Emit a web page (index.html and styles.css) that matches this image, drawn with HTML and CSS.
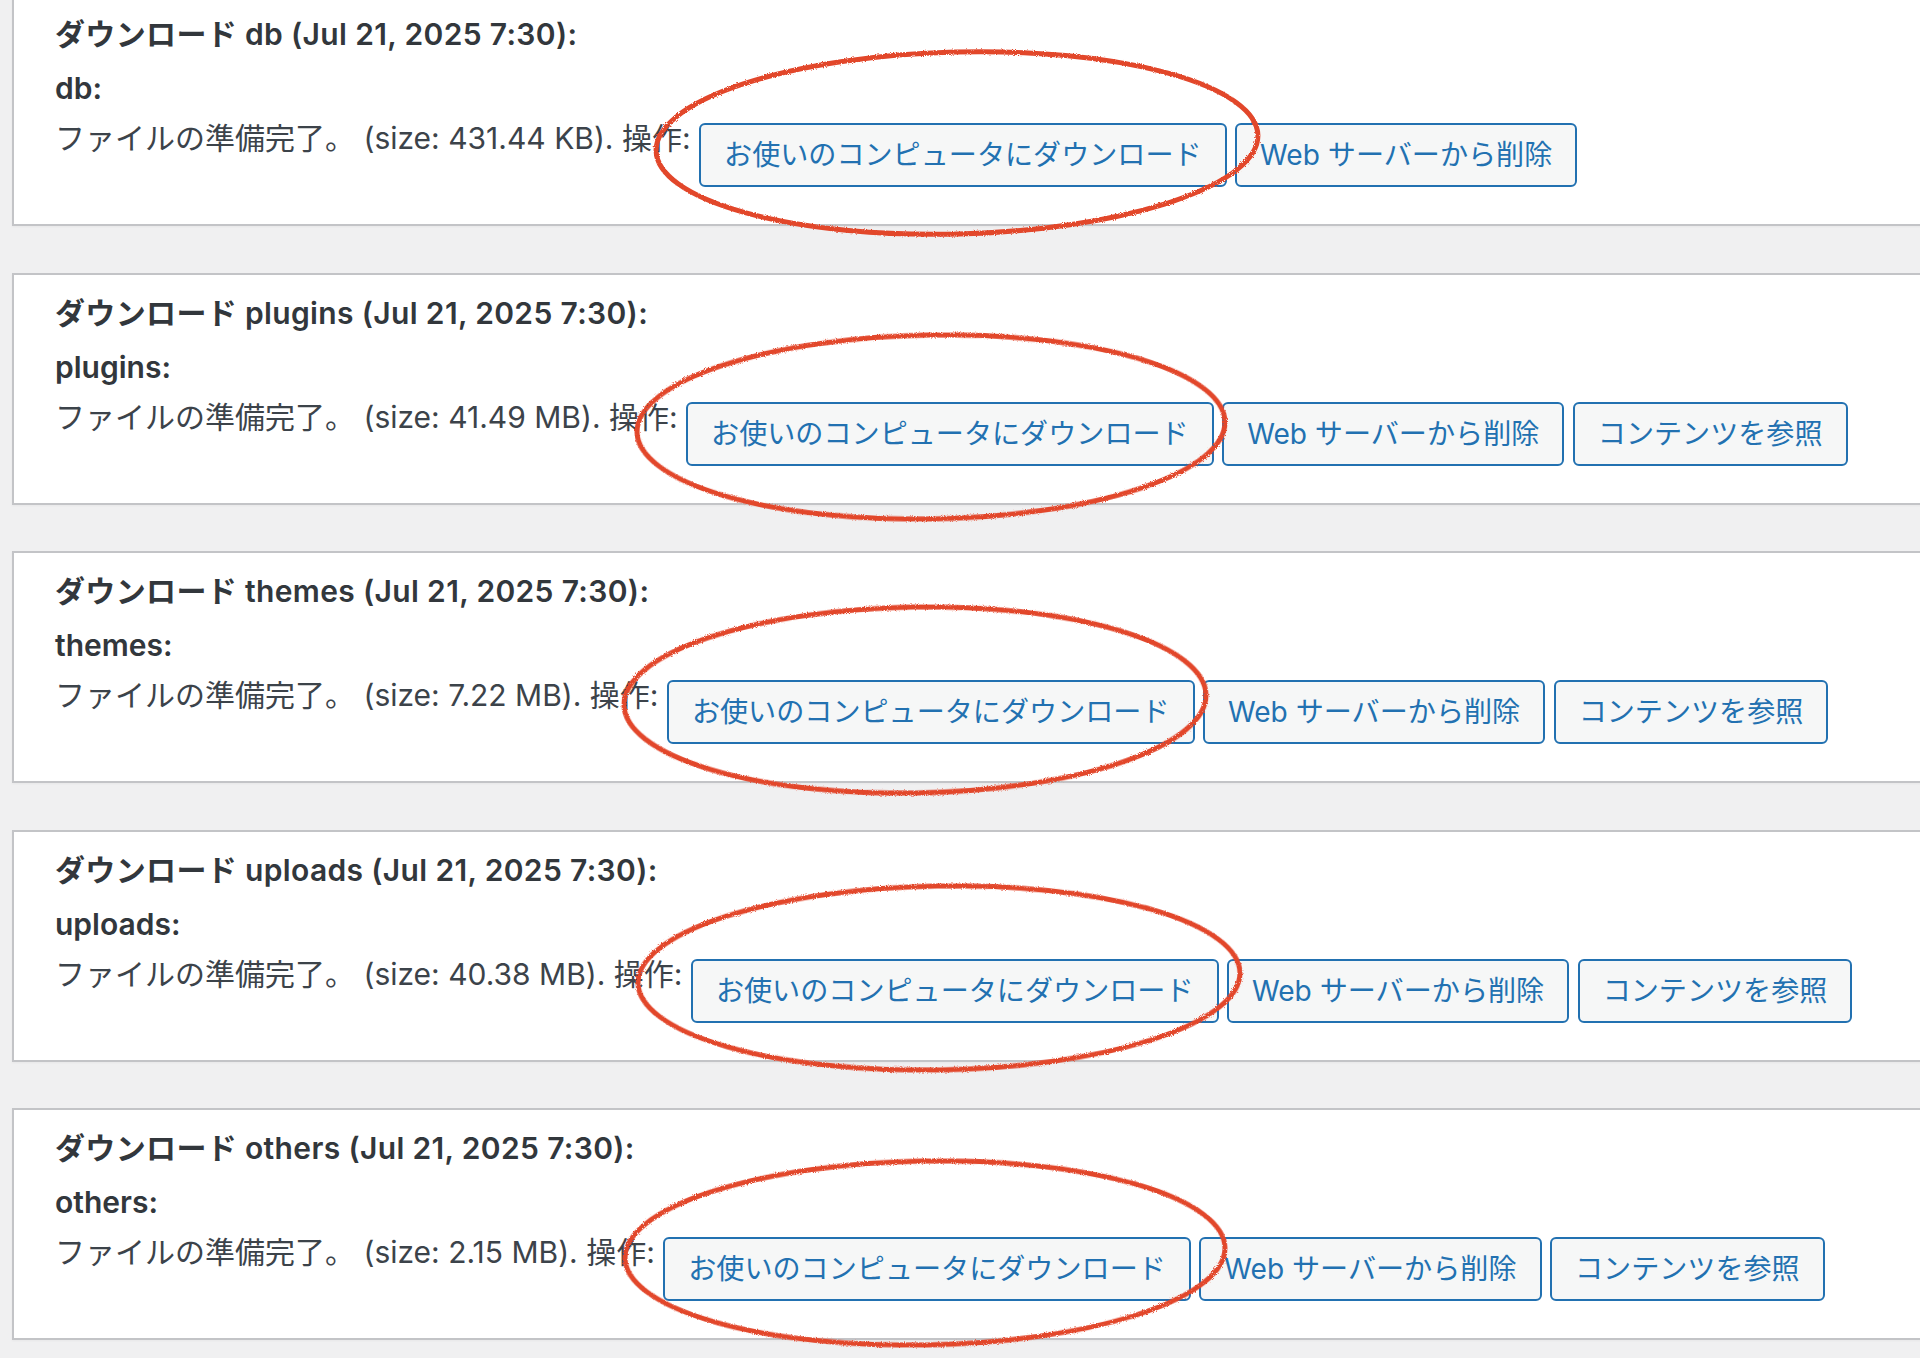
FILE: index.html
```html
<!DOCTYPE html>
<html lang="ja">
<head>
    <meta charset="UTF-8">
    <meta name="viewport" content="width=device-width, initial-scale=1.0">
    <title>UpdraftPlus - バックアップのダウンロード</title>
    <link rel="stylesheet" href="styles.css">
</head>
<body>
    <div class="wrap">
        <div class="download-box">
            <h3 class="download-title">ダウンロード db (Jul 21, 2025 7:30):</h3>
            <div class="entity"><strong>db</strong>:</div>
            <div class="status">ファイルの準備完了。 (size: 431.44 KB). 操作: <button class="button">お使いのコンピュータにダウンロード</button> <button class="button">Web サーバーから削除</button></div>
        </div>

        <div class="download-box">
            <h3 class="download-title">ダウンロード plugins (Jul 21, 2025 7:30):</h3>
            <div class="entity"><strong>plugins</strong>:</div>
            <div class="status">ファイルの準備完了。 (size: 41.49 MB). 操作: <button class="button">お使いのコンピュータにダウンロード</button> <button class="button">Web サーバーから削除</button> <button class="button">コンテンツを参照</button></div>
        </div>

        <div class="download-box">
            <h3 class="download-title">ダウンロード themes (Jul 21, 2025 7:30):</h3>
            <div class="entity"><strong>themes</strong>:</div>
            <div class="status">ファイルの準備完了。 (size: 7.22 MB). 操作: <button class="button">お使いのコンピュータにダウンロード</button> <button class="button">Web サーバーから削除</button> <button class="button">コンテンツを参照</button></div>
        </div>

        <div class="download-box">
            <h3 class="download-title">ダウンロード uploads (Jul 21, 2025 7:30):</h3>
            <div class="entity"><strong>uploads</strong>:</div>
            <div class="status">ファイルの準備完了。 (size: 40.38 MB). 操作: <button class="button">お使いのコンピュータにダウンロード</button> <button class="button">Web サーバーから削除</button> <button class="button">コンテンツを参照</button></div>
        </div>

        <div class="download-box">
            <h3 class="download-title">ダウンロード others (Jul 21, 2025 7:30):</h3>
            <div class="entity"><strong>others</strong>:</div>
            <div class="status">ファイルの準備完了。 (size: 2.15 MB). 操作: <button class="button">お使いのコンピュータにダウンロード</button> <button class="button">Web サーバーから削除</button> <button class="button">コンテンツを参照</button></div>
        </div>
    </div>

    <!-- hand-drawn marks over the download buttons -->
    <svg class="marks" viewBox="0 0 1920 1358" width="1920" height="1358">
        <defs>
            <filter id="rough" x="-10%" y="-10%" width="120%" height="120%">
                <feTurbulence type="fractalNoise" baseFrequency="0.9" numOctaves="2" seed="3" result="noise"/>
                <feDisplacementMap in="SourceGraphic" in2="noise" scale="3"/>
            </filter>
        </defs>
        <g class="mark" filter="url(#rough)">
            <ellipse cx="957" cy="143" rx="301" ry="91" transform="rotate(-1.5 957 143)"/>
            <ellipse cx="931" cy="427" rx="294" ry="92" transform="rotate(-1 931 427)"/>
            <ellipse cx="915" cy="700" rx="291" ry="93" transform="rotate(-1 915 700)"/>
            <ellipse cx="939" cy="978" rx="301" ry="92" transform="rotate(-1 939 978)"/>
            <ellipse cx="925" cy="1253" rx="300" ry="92" transform="rotate(-1 925 1253)"/>
        </g>
    </svg>
</body>
</html>
```

FILE: styles.css
```css
body {
    margin: 0;
    background-color: #f0f0f1;
    color: #3c434a;
    font-family: Inter, "Noto Sans CJK JP", sans-serif;
    overflow: hidden;
}
.wrap {
    margin: -6px -40px 0 12px;
}
.download-box {
    background: white;
    border: 2px solid #c3c4c7;
    box-shadow: 0 1px 2px rgba(0, 0, 0, 0.04);
    padding: 17px 20px 37px 41px;
    margin-bottom: 46.5px;
}
.download-title {
    margin: 0;
    font-size: 30px;
    line-height: 42px;
    font-weight: 600;
    letter-spacing: 0.35px;
    color: #32373c;
}
.entity {
    margin-top: 11px;
    font-size: 30px;
    line-height: 44px;
    font-weight: 600;
    color: #32373c;
}
.entity strong {
    font-weight: 600;
}
.status {
    margin-top: 13px;
    font-size: 30px;
    line-height: 30px;
    white-space: nowrap;
}
.button {
    display: inline-block;
    vertical-align: top;
    height: 64px;
    padding: 0 23px;
    font-family: Inter, "Noto Sans CJK JP", sans-serif;
    font-size: 28.1px;
    line-height: 60px;
    color: #2271b1;
    background-color: #f6f7f7;
    border: 2px solid #2271b1;
    border-radius: 6px;
    cursor: pointer;
}
.marks {
    position: absolute;
    top: 0;
    left: 0;
    pointer-events: none;
}
.mark ellipse {
    fill: none;
    stroke: #e2462c;
    stroke-width: 5;
}
```
